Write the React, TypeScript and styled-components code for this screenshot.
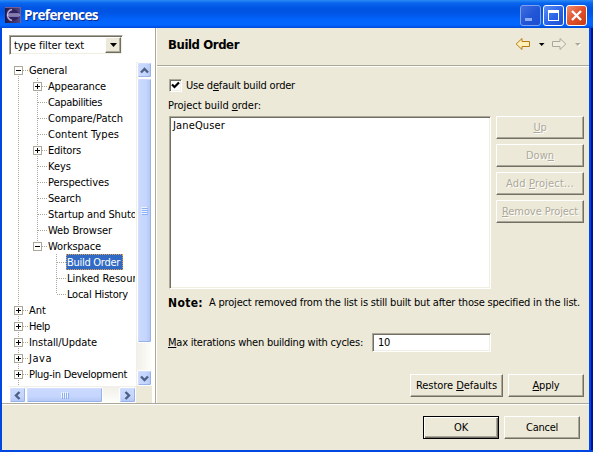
import React, { useLayoutEffect, useRef, useState } from "react";
import styled, { createGlobalStyle, css } from "styled-components";

const Global = createGlobalStyle`
  * { box-sizing: border-box; }
  body { margin: 0; overflow: hidden; background: #0046e0; }
`;

const FACE = "#ece9d8";
const SHADE = "#aca899";
const DARK = "#716f64";

const Window = styled.div`
  width: 593px;
  height: 452px;
  display: flex;
  flex-direction: column;
  font: 11px/16px "DejaVu Sans Condensed", "DejaVu Sans", sans-serif;
  color: #000;
  background: #0046e0;
`;
const TitleBar = styled.header`
  height: 28px;
  flex: none;
  display: flex;
  align-items: center;
  gap: 2px;
  padding: 2px 6px 0 5px;
  background: linear-gradient(#2a8bf5 0, #0a66ee 3px, #0054e3 8px, #0055e5 13px, #0264fc 20px, #0265fe 25px, #0048d8 28px);
`;
const Caption = styled.h1`
  flex: 1;
  display: flex;
  margin: -3px 0 0 1px;
  color: #fff;
  font: bold 13.5px/20px "Open Sans", sans-serif;
  text-shadow: 1px 1px 0 #0a2a8c;
`;
const CaptionButton = styled.button<{ $kind: "dim" | "blue" | "red" }>`
  width: 21px;
  height: 21px;
  padding: 0;
  display: grid;
  place-items: center;
  border: 1px solid ${(p) => (p.$kind === "dim" ? "#7ea2f0" : "#fff")};
  border-radius: 3px;
  background: ${(p) =>
    p.$kind === "dim"
      ? "linear-gradient(135deg,#426fe0,#2055d6 55%,#1c4fcf)"
      : p.$kind === "blue"
      ? "linear-gradient(135deg,#5c8df4,#2a63e8 55%,#1b50d0)"
      : "linear-gradient(135deg,#ee8e70,#e2502a 50%,#c83c14)"};
`;
const Frame = styled.div`
  flex: 1;
  min-height: 0;
  margin: 0 4px 2px 2px;
  display: flex;
  flex-direction: column;
  background: ${FACE};
  box-shadow: 2px 0 0 #0046f0, 4px 0 0 #00138c;
`;
const Main = styled.div`
  height: 375px;
  display: flex;
`;
const Sidebar = styled.aside`
  width: 154px;
  padding: 7px 0 0 7px;
  background: #fff;
  border-right: 1px solid ${SHADE};
`;
const sunken = css`
  background: #fff;
  border: 1px solid;
  border-color: ${SHADE} #fff #fff ${SHADE};
  box-shadow: inset 1px 1px 0 ${DARK}, inset -1px -1px 0 #f1efe2;
`;
const Combo = styled.div`
  width: 114px;
  height: 20px;
  display: flex;
  align-items: center;
  justify-content: space-between;
  padding: 1px 1px 1px 4px;
  ${sunken}
`;
const ComboArrow = styled.button`
  width: 16px;
  height: 16px;
  padding: 0;
  display: grid;
  place-items: center;
  background: ${FACE};
  border: 1px solid;
  border-color: #fff ${DARK} ${DARK} #fff;
  box-shadow: inset -1px -1px 0 ${SHADE};
`;
const TreeArea = styled.div`
  margin-top: 7px;
  display: grid;
  grid-template-columns: 127px 16px;
  grid-template-rows: 324px 17px;
`;
const Tree = styled.ul`
  margin: 0 1px 0 0;
  padding: 0;
  list-style: none;
  overflow: hidden;
`;
const Row = styled.li`
  height: 16px;
  display: flex;
  align-items: center;
  white-space: nowrap;
`;
const Guides = styled.svg`
  display: block;
  flex: none;
`;
const Name = styled.span<{ $selected?: boolean }>`
  display: flex;
  height: 16px;
  line-height: 16px;
  padding: 0 1px;
  ${(p) => p.$selected && "color:#fff;background:#316ac5;outline:1px dotted #e0a050;outline-offset:-1px;padding-right:3px;"}
`;
const Track = styled.div<{ $across?: boolean }>`
  display: flex;
  flex-direction: ${(p) => (p.$across ? "row" : "column")};
  justify-content: space-between;
  padding: ${(p) => (p.$across ? "1px 0 0" : "0 0 0 1px")};
  background: linear-gradient(${(p) => (p.$across ? "180deg" : "90deg")}, #f0efe8, #fefefb);
`;
const Corner = styled.div`
  background: ${FACE};
`;
const scrollPart = css<{ $across?: boolean }>`
  display: grid;
  place-items: center;
  padding: 0;
  border: 1px solid #fff;
  border-radius: 2px;
  background: linear-gradient(${(p: any) => (p.$across ? "180deg" : "90deg")}, #cbdafd, #c5d5fd 60%, #b1c6f5);
  box-shadow: inset -1px -1px 0 #98b3ea, inset 1px 1px 0 #d2defc;
`;
const ScrollButton = styled.button<{ $across?: boolean }>`
  width: ${(p) => (p.$across ? 17 : 15)}px;
  height: 16px;
  ${scrollPart}
`;
const Thumb = styled.div<{ $across?: boolean }>`
  ${scrollPart}
  ${(p) => (p.$across ? "width:77px;height:16px;margin-right:auto;" : "height:265px;width:15px;margin-bottom:auto;")}
`;
const Page = styled.section`
  flex: 1;
  min-width: 0;
  display: flex;
  flex-direction: column;
  border-left: 1px solid #fff;
`;
const PageHeader = styled.header`
  height: 39px;
  flex: none;
  display: flex;
  justify-content: space-between;
  padding: 7px 8px 0 11px;
  border-bottom: 1px solid #fff;
  box-shadow: inset 0 -1px 0 ${SHADE};
`;
const Heading = styled.h2`
  margin: 0;
  display: flex;
  font: bold 13px/18px "DejaVu Sans Condensed", "DejaVu Sans", sans-serif;
`;
const Content = styled.div`
  padding: 10px 5px 0 11px;
  display: flex;
  flex-direction: column;
`;
const CheckLine = styled.label`
  height: 16px;
  display: flex;
  align-items: center;
  gap: 4px;
  padding-left: 1px;
`;
const CheckBox = styled.span`
  width: 13px;
  height: 13px;
  display: grid;
  place-items: center;
  ${sunken}
`;
const ListLabel = styled.div`
  height: 16px;
  display: flex;
  margin: 4px 0 3px;
`;
const ListLine = styled.div`
  display: flex;
  gap: 5px;
  padding-left: 1px;
`;
const List = styled.div`
  width: 322px;
  height: 173px;
  padding: 0 0 0 3px;
  display: flex;
  ${sunken}
`;
const ButtonColumn = styled.div`
  display: flex;
  flex-direction: column;
  gap: 5px;
`;
const PushButton = styled.button<{ $w: number; $primary?: boolean }>`
  width: ${(p) => p.$w}px;
  height: 23px;
  padding: 0 0 1px;
  display: flex;
  align-items: center;
  justify-content: center;
  font: inherit;
  color: #000;
  background: ${FACE};
  border: 1px solid;
  border-color: ${(p) => (p.$primary ? "#000" : `#fff ${DARK} ${DARK} #fff`)};
  box-shadow: ${(p) =>
    p.$primary ? `inset 1px 1px 0 #fff, inset -1px -1px 0 ${DARK}, inset -2px -2px 0 ${SHADE}` : `inset -1px -1px 0 ${SHADE}`};
  &:disabled {
    color: ${SHADE};
    text-shadow: 1px 1px 0 #fff;
  }
`;
const NoteLine = styled.p`
  height: 16px;
  display: flex;
  gap: 6px;
  margin: 5px 0 0;
`;
const Strong = styled.strong`
  display: flex;
  font-size: 12px;
`;
const CyclesLine = styled.div`
  height: 20px;
  display: flex;
  align-items: center;
  justify-content: space-between;
  width: 323px;
  margin-top: 22px;
`;
const Field = styled.div`
  width: 119px;
  height: 19px;
  padding: 0 5px;
  display: flex;
  ${sunken}
`;
const Actions = styled.div<{ $footer?: boolean }>`
  display: flex;
  justify-content: flex-end;
  gap: 5px;
  ${(p) => (p.$footer ? `border-top:1px solid ${SHADE};box-shadow:inset 0 1px 0 #fff;padding:12px 9px 0 0;flex:1;` : "margin-top:22px;")}
`;
const History = styled.svg`
  margin-top: 2px;
`;
const Run = styled.span`
  display: inline-block;
  margin: 1px 0 -1px;
  white-space: nowrap;
  u { text-underline-offset: 1px; text-decoration-thickness: 1px; text-decoration-skip-ink: none; }
`;

/** Text tracked so that it fills the given width; "&" marks the mnemonic letter. */
function Text({ w, children }: { w: number; children: string }) {
  const ref = useRef<HTMLSpanElement>(null);
  const [track, setTrack] = useState(0);
  const plain = children.replace("&", "");
  useLayoutEffect(() => {
    if (ref.current) setTrack((w - ref.current.getBoundingClientRect().width) / plain.length);
  }, []);
  const at = children.indexOf("&");
  return (
    <Run ref={ref} style={{ letterSpacing: track }}>
      {at < 0 ? plain : <>{plain.slice(0, at)}<u>{plain[at]}</u>{plain.slice(at + 1)}</>}
    </Run>
  );
}

type Node = { text: string; w: number; depth: number; box?: "+" | "-"; selected?: boolean; last?: boolean };
const nodes: Node[] = [
  { text: "General", w: 38, depth: 0, box: "-" },
  { text: "Appearance", w: 58, depth: 1, box: "+" },
  { text: "Capabilities", w: 54, depth: 1 },
  { text: "Compare/Patch", w: 75, depth: 1 },
  { text: "Content Types", w: 71, depth: 1 },
  { text: "Editors", w: 33, depth: 1, box: "+" },
  { text: "Keys", w: 23, depth: 1 },
  { text: "Perspectives", w: 61, depth: 1 },
  { text: "Search", w: 33, depth: 1 },
  { text: "Startup and Shutdown", w: 109, depth: 1 },
  { text: "Web Browser", w: 64, depth: 1 },
  { text: "Workspace", w: 53, depth: 1, box: "-", last: true },
  { text: "Build Order", w: 53, depth: 2, selected: true },
  { text: "Linked Resources", w: 86, depth: 2 },
  { text: "Local History", w: 61, depth: 2, last: true },
  { text: "Ant", w: 17, depth: 0, box: "+" },
  { text: "Help", w: 21, depth: 0, box: "+" },
  { text: "Install/Update", w: 68, depth: 0, box: "+" },
  { text: "Java", w: 23, depth: 0, box: "+" },
  { text: "Plug-in Development", w: 98, depth: 0, box: "+" },
  { text: "Run/Debug", w: 54, depth: 0, box: "+" },
];

function TreeRow({ n, first }: { n: Node; first?: boolean }) {
  const x = 9.5 + n.depth * 19;
  const line = { stroke: SHADE, strokeDasharray: "1 1", fill: "none" };
  return (
    <Row>
      <Guides width={19 + n.depth * 19} height="16" shapeRendering="crispEdges">
        {n.depth > 0 && <path d="M9.5 0V16" {...line} />}
        <path d={`M${x} ${first ? 8 : 0}V${n.last ? 8 : 16}`} {...line} />
        <path d={`M${x + 0.5} 8.5h9`} {...line} />
        {n.box && (
          <>
            <rect x={x - 4} y="4.5" width="8" height="8" fill="#fff" stroke={SHADE} />
            <path d={`M${x - 2.5} 8.5h5${n.box === "+" ? `M${x} 6v5` : ""}`} stroke="#000" />
          </>
        )}
      </Guides>
      <Name $selected={n.selected}><Text w={n.w}>{n.text}</Text></Name>
    </Row>
  );
}

const chevrons = {
  up: "M1 6.5 4.5 3 8 6.5",
  down: "M1 2.5 4.5 6 8 2.5",
  left: "M6.5 1 3 4.5 6.5 8",
  right: "M2.5 1 6 4.5 2.5 8",
};
const Chevron = ({ to }: { to: keyof typeof chevrons }) => (
  <svg width="9" height="9"><path d={chevrons[to]} fill="none" stroke="#4d6185" strokeWidth="2.4" /></svg>
);

export default function App() {
  return (
    <Window>
      <Global />
      <TitleBar>
        <svg width="16" height="16">
          <defs>
            <linearGradient id="e" x2="1"><stop stopColor="#241842" /><stop offset="1" stopColor="#564a88" /></linearGradient>
          </defs>
          <rect width="16" height="16" fill="url(#e)" />
          <path d="M0 .5H16M15.5 0V16" stroke="#765d98" />
          <circle cx="8.5" cy="8" r="5.5" fill="#30245c" />
          <path d="M7 2.5C1 4 1 12 7 13.5" fill="none" stroke="#b5a7d6" strokeWidth="1.6" />
          <path d="M3 6.5h11M3 9.5h11" stroke="#7d72b4" />
          <path d="M2 8h13" stroke="#ddd8f4" />
        </svg>
        <Caption><Text w={74}>Preferences</Text></Caption>
        <CaptionButton $kind="dim"><svg width="19" height="19"><path d="M4 13.5h7" stroke="#8eabf5" strokeWidth="3" /></svg></CaptionButton>
        <CaptionButton $kind="blue"><svg width="19" height="19" shapeRendering="crispEdges"><path d="M4.5 5v9.5h10V5" fill="none" stroke="#fff" /><path d="M4 5.5h11" stroke="#fff" strokeWidth="3" /></svg></CaptionButton>
        <CaptionButton $kind="red"><svg width="19" height="19"><path d="m5 5 9 9m0-9-9 9" stroke="#fff" strokeWidth="2.4" /></svg></CaptionButton>
      </TitleBar>
      <Frame>
        <Main>
          <Sidebar>
            <Combo>
              <Text w={70}>type filter text</Text>
              <ComboArrow><svg width="7" height="4"><path d="M0 0h7L3.5 4z" /></svg></ComboArrow>
            </Combo>
            <TreeArea>
              <Tree>{nodes.map((n, i) => <TreeRow key={n.text} n={n} first={i === 0} />)}</Tree>
              <Track>
                <ScrollButton><Chevron to="up" /></ScrollButton>
                <Thumb><svg width="7" height="8" shapeRendering="crispEdges"><path d="M0 .5h6M0 2.5h6M0 4.5h6M0 6.5h6" stroke="#eef4fe" /><path d="M1 1.5h6M1 3.5h6M1 5.5h6M1 7.5h6" stroke="#8cb0f8" /></svg></Thumb>
                <ScrollButton><Chevron to="down" /></ScrollButton>
              </Track>
              <Track $across>
                <ScrollButton $across><Chevron to="left" /></ScrollButton>
                <Thumb $across><svg width="8" height="7" shapeRendering="crispEdges"><path d="M.5 0v6M2.5 0v6M4.5 0v6M6.5 0v6" stroke="#eef4fe" /><path d="M1.5 1v6M3.5 1v6M5.5 1v6M7.5 1v6" stroke="#8cb0f8" /></svg></Thumb>
                <ScrollButton $across><Chevron to="right" /></ScrollButton>
              </Track>
              <Corner />
            </TreeArea>
          </Sidebar>
          <Page>
            <PageHeader>
              <Heading><Text w={71}>Build Order</Text></Heading>
              <History width="66" height="16">
                <path d="M1.2 7 7 1.500V4.500h7.500v5H7v3z" fill="#fff0b8" stroke="#b87a14" />
                <path d="M24 6h5.500L26.700 9z" />
                <path d="M50.800 7 45 1.500V4.500h-7.500v5H45v3z" fill="#f0eddf" stroke={SHADE} />
                <path d="M61 7h5.500L63.700 10z" fill="#fff" />
                <path d="M60 6h5.500L62.700 9z" fill={SHADE} />
              </History>
            </PageHeader>
            <Content>
              <CheckLine>
                <CheckBox><svg width="9" height="9"><path d="M1 3.5 3.5 6 8 1.5" fill="none" stroke="#000" strokeWidth="2.2" /></svg></CheckBox>
                <Text w={109}>Use d&efault build order</Text>
              </CheckLine>
              <ListLabel><Text w={93}>Project build &order:</Text></ListLabel>
              <ListLine>
                <List><Text w={52}>JaneQuser</Text></List>
                <ButtonColumn>
                  <PushButton $w={88} disabled><Text w={13}>&Up</Text></PushButton>
                  <PushButton $w={88} disabled><Text w={28}>Dow&n</Text></PushButton>
                  <PushButton $w={88} disabled><Text w={68}>Add &Project...</Text></PushButton>
                  <PushButton $w={88} disabled><Text w={76}>&Remove Project</Text></PushButton>
                </ButtonColumn>
              </ListLine>
              <NoteLine><Strong><Text w={35}>Note:</Text></Strong><Text w={371}>A project removed from the list is still built but after those specified in the list.</Text></NoteLine>
              <CyclesLine><Text w={195}>&Max iterations when building with cycles:</Text><Field><Text w={12}>10</Text></Field></CyclesLine>
              <Actions>
                <PushButton $w={93}><Text w={81}>Restore &Defaults</Text></PushButton>
                <PushButton $w={76}><Text w={27}>&Apply</Text></PushButton>
              </Actions>
            </Content>
          </Page>
        </Main>
        <Actions $footer>
          <PushButton $w={76} $primary><Text w={14}>OK</Text></PushButton>
          <PushButton $w={76}><Text w={32}>Cancel</Text></PushButton>
        </Actions>
      </Frame>
    </Window>
  );
}
